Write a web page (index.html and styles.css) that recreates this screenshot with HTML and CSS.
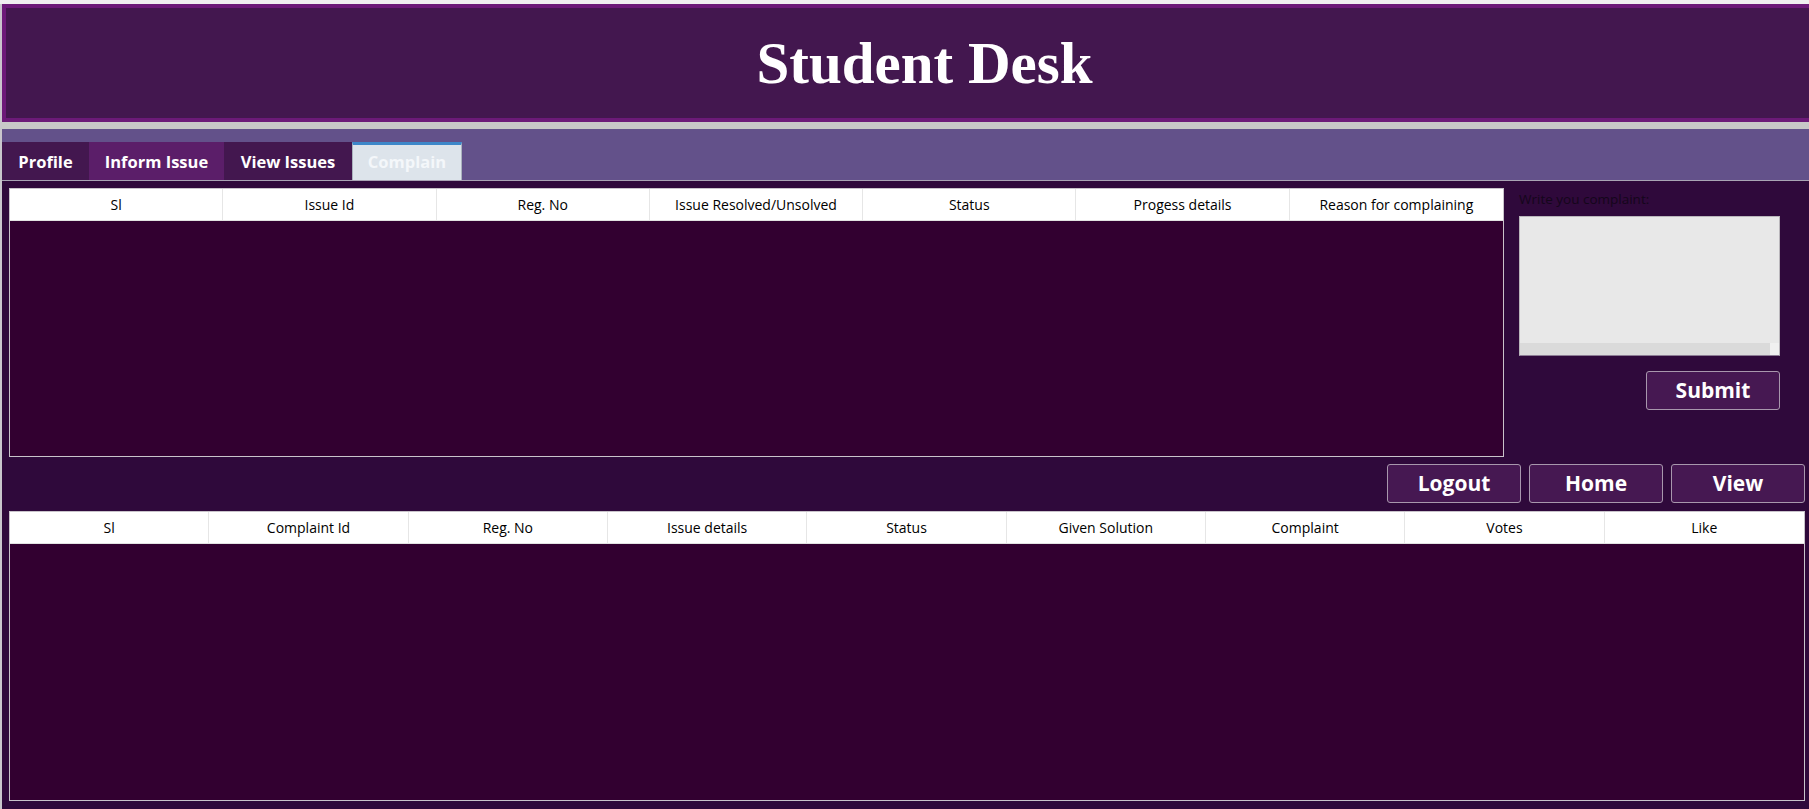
FILE: index.html
```html
<!DOCTYPE html>
<html lang="en">
<head>
<meta charset="utf-8">
<title>Student Desk</title>
<link rel="stylesheet" href="styles.css">
</head>
<body>
<div class="topline"></div>
<div class="app">
  <header class="header">
    <h1 class="title">Student Desk</h1>
  </header>
  <div class="sep"></div>
  <nav class="tabs">
    <div class="tab tab-dark tab-profile">Profile</div>
    <div class="tab tab-mid tab-inform">Inform Issue</div>
    <div class="tab tab-dark tab-view">View Issues</div>
    <div class="tab tab-active tab-complain">Complain</div>
  </nav>
  <main class="content">
    <div class="top-row">
      <div class="grid issues">
        <div class="grid-head cols-7">
          <div class="cell">Sl</div>
          <div class="cell">Issue Id</div>
          <div class="cell">Reg. No</div>
          <div class="cell">Issue Resolved/Unsolved</div>
          <div class="cell">Status</div>
          <div class="cell">Progess details</div>
          <div class="cell">Reason for complaining</div>
        </div>
        <div class="grid-body"></div>
      </div>
      <aside class="complaint">
        <label class="complaint-label">Write you complaint:</label>
        <div class="textbox">
          <div class="hscroll"><div class="hscroll-track"></div><div class="hscroll-corner"></div></div>
        </div>
        <button class="btn submit">Submit</button>
      </aside>
    </div>
    <div class="actions">
      <button class="btn">Logout</button>
      <button class="btn">Home</button>
      <button class="btn">View</button>
    </div>
    <div class="grid complaints">
      <div class="grid-head cols-9">
        <div class="cell">Sl</div>
        <div class="cell">Complaint Id</div>
        <div class="cell">Reg. No</div>
        <div class="cell">Issue details</div>
        <div class="cell">Status</div>
        <div class="cell">Given Solution</div>
        <div class="cell">Complaint</div>
        <div class="cell">Votes</div>
        <div class="cell">Like</div>
      </div>
      <div class="grid-body"></div>
    </div>
  </main>
</div>
</body>
</html>
```

FILE: styles.css
```css
html, body {
  margin: 0;
  padding: 0;
  height: 809px;
  overflow: hidden;
}

body {
  background: #2f093b;
  font-family: "Open Sans", "Noto Sans", sans-serif;
}

.topline {
  height: 4px;
  background: #f0f0f0;
}

.app {
  height: 805px;
  box-sizing: border-box;
  border-left: 2px solid #c9c6cc;
  display: flex;
  flex-direction: column;
}

.header {
  height: 118px;
  box-sizing: border-box;
  border: 4px solid #6c1a78;
  border-right: 0;
  background: #43174f;
  display: flex;
  align-items: center;
  justify-content: center;
  padding-left: 34px;
}

.title {
  margin: 0;
  font-family: "Liberation Serif", "Times New Roman", serif;
  font-weight: 700;
  font-size: 59px;
  line-height: 1;
  color: #ffffff;
}

.sep {
  height: 7px;
  background: #c8c8c8;
}

.tabs {
  height: 52px;
  box-sizing: border-box;
  background: #63518a;
  border-bottom: 1px solid #a9a4b4;
  display: flex;
  align-items: flex-end;
}

.tab {
  height: 38px;
  box-sizing: border-box;
  display: flex;
  align-items: center;
  justify-content: center;
  font-weight: 700;
  font-size: 16.5px;
  color: #ffffff;
}

.tab-profile { width: 87px; }
.tab-inform { width: 135px; }
.tab-view { width: 128px; }
.tab-complain { width: 110px; }

.tab-dark { background: #43174f; }
.tab-mid { background: #5b1e69; }

.tab-active {
  background: #dde4eb;
  border-top: 3px solid #3d87c9;
  border-left: 1px solid #aab3bd;
  border-right: 1px solid #aab3bd;
  color: #f4f7fa;
  padding-bottom: 3px;
}

.content {
  flex: 1;
  padding: 7px 4px 0 7px;
  display: flex;
  flex-direction: column;
}

.top-row {
  display: flex;
  gap: 15px;
  height: 269px;
}

.grid {
  border: 1px solid #c8c3ca;
  box-sizing: border-box;
  background: #320030;
  display: flex;
  flex-direction: column;
}

.issues {
  flex: 1;
}

.complaints {
  margin-top: 8px;
  height: 290px;
}

.grid-head {
  display: grid;
  height: 32px;
  box-sizing: border-box;
  background: #ffffff;
  border-bottom: 1px solid #e2e2e2;
}

.cols-7 { grid-template-columns: repeat(7, 1fr); }
.cols-9 { grid-template-columns: repeat(9, 1fr); }

.cell {
  display: flex;
  align-items: center;
  justify-content: center;
  border-right: 1px solid #e6e6e6;
  font-size: 14px;
  color: #000000;
  white-space: nowrap;
}

.cell:last-child {
  border-right: 0;
}

.grid-body {
  flex: 1;
}

.complaint {
  width: 261px;
  margin-right: 25px;
  display: flex;
  flex-direction: column;
}

.complaint-label {
  height: 22px;
  line-height: 22px;
  font-size: 13.5px;
  color: #14061a;
}

.textbox {
  margin-top: 6px;
  height: 140px;
  box-sizing: border-box;
  background: #e8e8e8;
  border: 1px solid #b9b6bb;
  border-bottom-color: #8c7c94;
  display: flex;
  flex-direction: column;
  justify-content: flex-end;
}

.hscroll {
  height: 12px;
  display: flex;
}

.hscroll-track {
  flex: 1;
  background: #dadada;
}

.hscroll-corner {
  width: 9px;
  background: #f0f0f0;
}

.btn {
  width: 134px;
  height: 39px;
  box-sizing: border-box;
  background: #461852;
  border: 1px solid #a897ad;
  border-radius: 3px;
  color: #ffffff;
  font-family: "Open Sans", "Noto Sans", sans-serif;
  font-weight: 700;
  font-size: 21px;
  padding: 0;
  line-height: 1;
}

.submit {
  margin-top: 15px;
  align-self: flex-end;
}

.actions {
  margin-top: 7px;
  display: flex;
  justify-content: flex-end;
  gap: 8px;
}
```
